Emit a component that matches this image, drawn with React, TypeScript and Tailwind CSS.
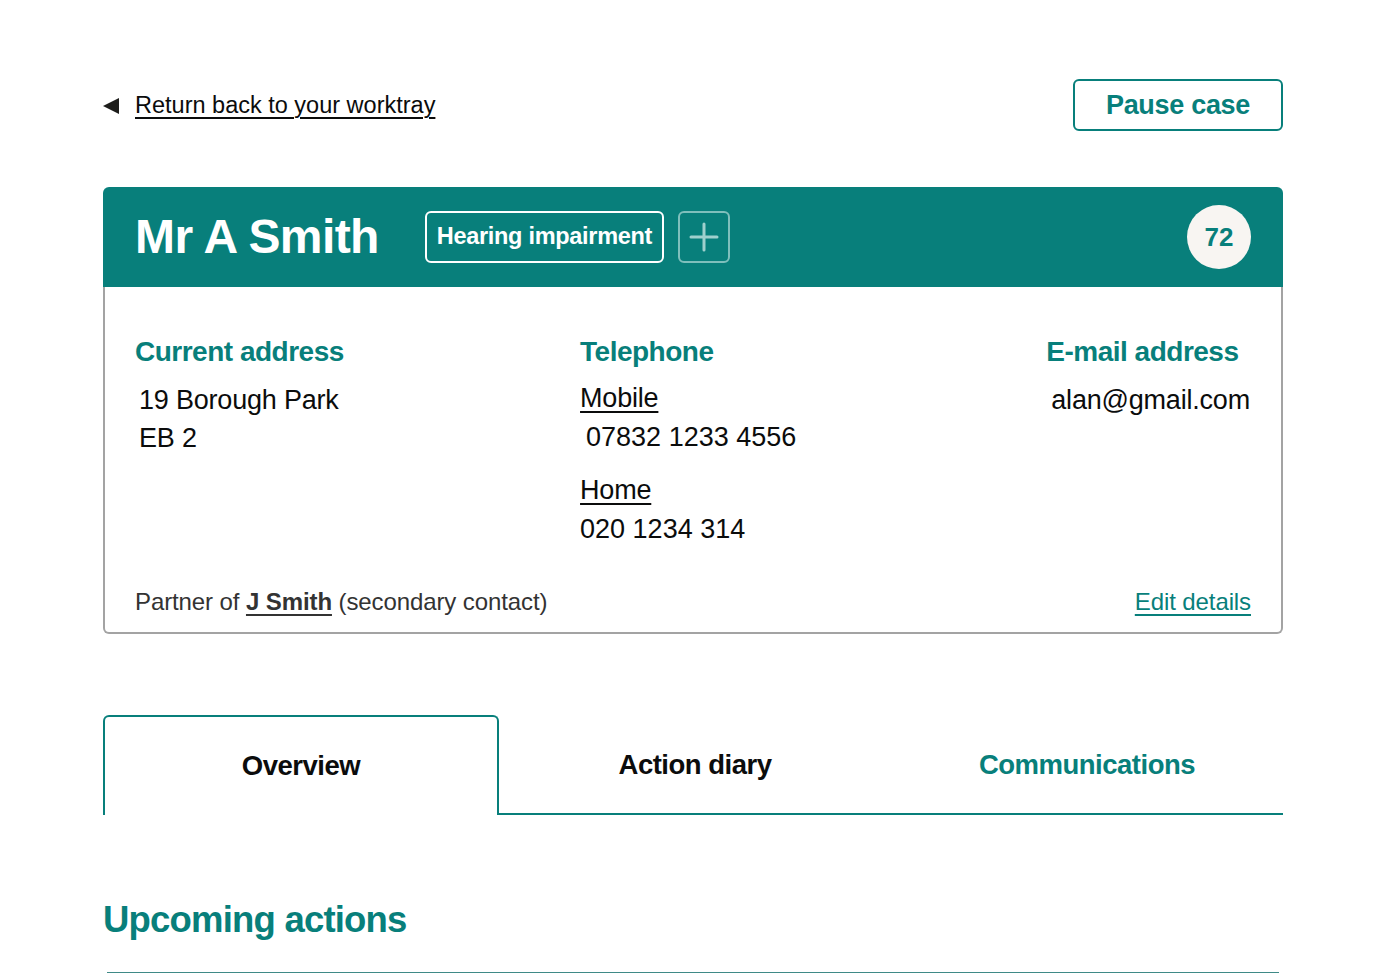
import { useState } from "react";

const font = { fontFamily: "'Liberation Sans', Arial, sans-serif" } as const;

const TABS = ["Overview", "Action diary", "Communications"];

export default function App() {
  const [tab, setTab] = useState(0);

  return (
    <div className="min-h-screen bg-white text-[#0b0c0c]" style={font}>
      <div className="mx-auto w-[1180px] pt-[79px]">
        {/* Top bar */}
        <div className="flex items-center justify-between">
          <a href="#" className="flex items-center gap-[16px] pt-[2px] text-[23.5px] tracking-[0px] text-[#0b0c0c]">
            <svg width="16" height="16" viewBox="0 0 16 16" aria-hidden>
              <path d="M16 0 L16 16 L0 8 Z" fill="#1d1d1b" />
            </svg>
            <span className="underline underline-offset-[4px] decoration-[1.5px]">Return back to your worktray</span>
          </a>
          <button className="h-[52px] w-[210px] rounded-[6px] border-2 border-[#087f7b] text-[27px] font-bold tracking-[-0.3px] text-[#087f7b]">
            Pause case
          </button>
        </div>

        {/* Customer card */}
        <div className="mt-[56px]">
          <div className="flex h-[100px] items-center rounded-t-[6px] bg-[#087f7b] px-[32px]">
            <h1 className="text-[48px] font-bold leading-none tracking-[-0.6px] text-white">Mr A Smith</h1>
            <span className="ml-[46px] flex h-[52px] items-center rounded-[6px] border-2 border-white px-[10px] text-[23.5px] font-bold tracking-[-0.3px] text-white">
              Hearing impairment
            </span>
            <button className="ml-[14px] flex h-[52px] w-[52px] items-center justify-center rounded-[6px] border-2 border-[#7fbfbc]">
              <svg width="30" height="30" viewBox="0 0 30 30" aria-hidden>
                <path d="M15 2 V28 M2 15 H28" stroke="#9fd0cd" strokeWidth="3" strokeLinecap="round" />
              </svg>
            </button>
            <span className="ml-auto flex h-[64px] w-[64px] items-center justify-center rounded-full bg-[#f8f5f2] text-[26px] font-bold text-[#087f7b]">
              72
            </span>
          </div>

          <div className="rounded-b-[6px] border-2 border-t-0 border-[#a3a3a3] px-[30px] pb-[12px] pt-[49px]">
            <div className="flex justify-between">
              <div>
                <h2 className="text-[28px] font-bold leading-[32px] tracking-[-0.5px] text-[#087f7b]">Current address</h2>
                <p className="mt-[13px] pl-[4px] text-[27px] leading-[38px] tracking-[-0.2px]">
                  19 Borough Park
                  <br />
                  EB 2
                </p>
              </div>
              <div className="w-[230px]">
                <h2 className="text-[28px] font-bold leading-[32px] tracking-[-0.5px] text-[#087f7b]">Telephone</h2>
                <div className="mt-[11px] text-[27px] leading-[39px] tracking-[-0.2px]">
                  <a href="#" className="underline underline-offset-[4px] decoration-[1.5px]">Mobile</a>
                  <p className="pl-[6px] tracking-[0px]">07832 1233 4556</p>
                  <a href="#" className="mt-[14px] inline-block underline underline-offset-[4px] decoration-[1.5px]">Home</a>
                  <p className="tracking-[0px]">020 1234 314</p>
                </div>
              </div>
              <div className="pr-[1px]">
                <h2 className="text-[28px] font-bold leading-[32px] tracking-[-0.5px] text-[#087f7b]">E-mail address</h2>
                <p className="mt-[13px] pl-[5px] text-[27px] leading-[38px] tracking-[-0.2px]">alan@gmail.com</p>
              </div>
            </div>

            <div className="mt-[35px] flex items-center justify-between text-[24px] tracking-[-0.1px]">
              <p className="text-[#333]">
                Partner of{" "}
                <a href="#" className="font-bold underline underline-offset-[4px] decoration-[1.5px]">J Smith</a>{" "}
                (secondary contact)
              </p>
              <a href="#" className="text-[#087f7b] underline underline-offset-[4px] decoration-[1.5px]">Edit details</a>
            </div>
          </div>
        </div>

        {/* Tabs */}
        <div className="mt-[81px] flex">
          {TABS.map((t, i) => (
            <button
              key={t}
              onClick={() => setTab(i)}
              className={
                i === tab
                  ? "flex h-[100px] flex-1 items-center justify-center rounded-t-[6px] border-2 border-b-0 border-[#087f7b] text-[27.5px] font-bold tracking-[-0.5px] text-[#0b0c0c]"
                  : "flex h-[100px] flex-1 items-center justify-center border-t-2 border-b-2 border-t-transparent border-b-[#087f7b] text-[27.5px] font-bold tracking-[-0.5px] " +
                    (i === 2 ? "text-[#087f7b]" : "text-[#0b0c0c]")
              }
            >
              {t}
            </button>
          ))}
        </div>

        {/* Upcoming actions */}
        <h2 className="mt-[83px] text-[36.5px] font-bold leading-[44px] tracking-[-0.8px] text-[#087f7b]">Upcoming actions</h2>
        <div className="mx-[4px] mt-[30px] h-[1px] bg-[#3f8a87]" />
      </div>
    </div>
  );
}
